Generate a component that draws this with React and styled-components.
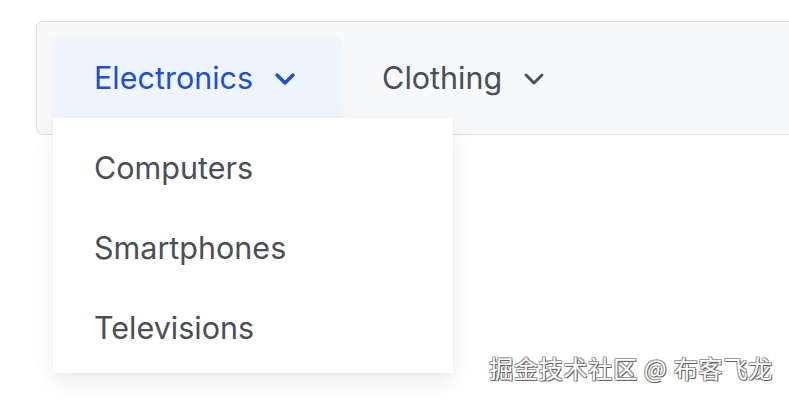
import React from "react";
import styled, { createGlobalStyle } from "styled-components";

const Global = createGlobalStyle`
  html, body { margin: 0; padding: 0; background: #ffffff; overflow: hidden; }
  body { font-family: Inter, "Noto Sans", sans-serif; width: 789px; height: 400px; }
`;

const Page = styled.div`
  position: relative;
  width: 789px;
  height: 400px;
  padding: 21px 0 0 36px;
  box-sizing: border-box;
  overflow: hidden;
`;

const NavBar = styled.nav`
  display: flex;
  align-items: stretch;
  width: 820px;
  box-sizing: border-box;
  padding: 16px;
  background: #f8f9fb;
  border: 1px solid #dcdee2;
  border-radius: 7px;
`;

const NavItem = styled.div`
  position: relative;
  display: flex;
  align-items: center;
  gap: 16px;
  height: 80px;
  padding: 1px 40px 0 41px;
  box-sizing: border-box;
  background: ${(p) => (p.$active ? "#eef5ff" : "transparent")};
  box-shadow: ${(p) => (p.$active ? "0 2px 6px rgba(30,60,120,0.06)" : "none")};
  border-radius: 4px 4px 0 0;
  color: ${(p) => (p.$active ? "#1f4fd3" : "#4a4e55")};
  font-size: 30.5px;
  cursor: pointer;
`;

const Label = styled.span`
  line-height: 1;
`;

const Menu = styled.ul`
  position: absolute;
  top: 100%;
  left: 0;
  width: 400px;
  margin: 0;
  padding: 9px 0 6px;
  list-style: none;
  background: #ffffff;
  box-shadow: 0 10px 24px rgba(0, 0, 0, 0.07), 0 2px 6px rgba(0, 0, 0, 0.03);
  z-index: 2;
`;

const MenuItem = styled.li`
  display: flex;
  align-items: center;
  height: 80px;
  padding-left: 41px;
  color: #4a4e55;
  font-size: 30.5px;
`;

const Watermark = styled.div`
  position: absolute;
  right: 16px;
  bottom: 15px;
  font-family: "Noto Sans CJK SC", sans-serif;
  font-size: 24px;
  letter-spacing: 0.8px;
  color: #ffffff;
  text-shadow: 1px 1px 0 #5f5f5f, -1px -1px 0 #9a9a9a, 1px -1px 0 #9a9a9a, -1px 1px 0 #9a9a9a;
  z-index: 5;
`;

const Chevron = ({ color, width }) => (
  <svg width="32" height="32" viewBox="0 0 24 24" fill="none" stroke={color} strokeWidth={width} strokeLinecap="round" strokeLinejoin="round">
    <path d="m6 9 6 6 6-6" />
  </svg>
);

export default function App() {
  return (
    <>
      <Global />
      <Page>
        <NavBar>
          <NavItem $active>
            <Label>Electronics</Label>
            <Chevron color="#1f4fd3" width={2.6} />
            <Menu>
              <MenuItem>Computers</MenuItem>
              <MenuItem>Smartphones</MenuItem>
              <MenuItem>Televisions</MenuItem>
            </Menu>
          </NavItem>
          <NavItem>
            <Label>Clothing</Label>
            <Chevron color="#4a4e55" width={2.2} />
          </NavItem>
        </NavBar>
        <Watermark>掘金技术社区 @ 布客飞龙</Watermark>
      </Page>
    </>
  );
}
